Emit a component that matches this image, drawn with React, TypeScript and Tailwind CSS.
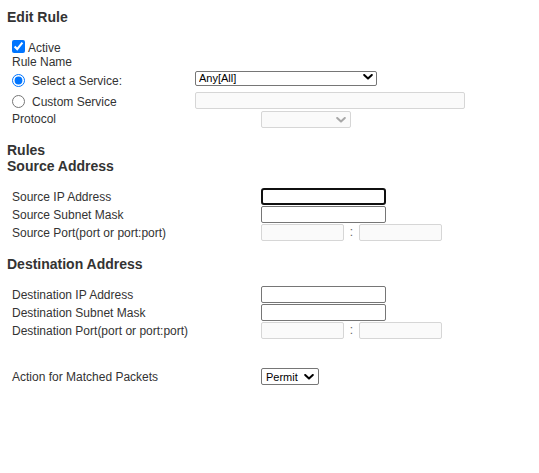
import React from "react";

function Chevron({ color, className }: { color: string; className: string }) {
  return (
    <svg
      width="10"
      height="6"
      viewBox="0 0 10 6"
      className={className}
      aria-hidden="true"
    >
      <path d="M1.2 1 L5 4.6 L8.8 1" fill="none" stroke={color} strokeWidth="2" strokeLinecap="round" strokeLinejoin="round" />
    </svg>
  );
}

function FieldRow({
  label,
  children,
}: {
  label: string;
  children: React.ReactNode;
}) {
  return (
    <div className="flex h-[18px] items-start">
      <div className="mt-[2px] w-[249px] shrink-0 leading-[14px] whitespace-nowrap">{label}</div>
      {children}
    </div>
  );
}

function TextInput({ focused = false }: { focused?: boolean }) {
  return focused ? (
    <input
      type="text"
      className="h-[17px] w-[125px] rounded-[3px] border-2 border-[#101010] bg-white px-[2px] text-[12px] outline-none"
    />
  ) : (
    <input
      type="text"
      className="h-[17px] w-[125px] rounded-[2px] border border-[#767676] bg-white px-[2px] text-[12px] outline-none"
    />
  );
}

function PortInputs() {
  return (
    <div className="flex items-start">
      <input
        type="text"
        disabled
        className="h-[17px] w-[83px] rounded-[2px] border border-[#d6d6d6] bg-[#fafafa] outline-none"
      />
      <span className="w-[15px] text-center leading-[17px] text-[#666]">:</span>
      <input
        type="text"
        disabled
        className="h-[17px] w-[83px] rounded-[2px] border border-[#d6d6d6] bg-[#fafafa] outline-none"
      />
    </div>
  );
}

export default function App() {
  return (
    <div className="min-h-[473px] w-[539px] bg-white px-[7px] font-['Liberation_Sans',Arial,sans-serif] text-[12px] text-[#333]">
      <div className="pt-[9px] text-[14px] font-bold leading-[16px]">Edit Rule</div>

      <div className="pl-[5px]">
        <div className="mt-[15px] flex h-[14px] items-start">
          <input type="checkbox" defaultChecked className="m-0 h-[13px] w-[13px]" />
          <span className="ml-[3px] mt-[1px] leading-[14px]">Active</span>
        </div>
        <div className="h-[14px] pt-[1px] leading-[14px]">Rule Name</div>

        <div className="flex h-[23px] items-start">
          <div className="mt-[5px] flex h-[14px] w-[183px] shrink-0 items-start">
            <input type="radio" name="svc" defaultChecked className="m-0 mt-[0.5px] h-[13px] w-[13px]" />
            <span className="ml-[7px] mt-[1px] leading-[14px]">Select a Service:</span>
          </div>
          <div className="relative mt-[1px] h-[15px] w-[182px]">
            <select
              defaultValue="any"
              className="h-full w-full appearance-none rounded-[2px] border border-[#767676] bg-white pl-[3px] text-[11px] leading-[13px] text-black outline-none"
            >
              <option value="any">Any[All]</option>
            </select>
            <Chevron color="#000" className="pointer-events-none absolute right-[4px] top-[5px]" />
          </div>
        </div>

        <div className="flex h-[19px] items-start">
          <div className="mt-[3px] flex h-[14px] w-[183px] shrink-0 items-start">
            <input type="radio" name="svc" className="m-0 mt-[0.5px] h-[13px] w-[13px]" />
            <span className="ml-[7px] mt-[1px] leading-[14px]">Custom Service</span>
          </div>
          <input
            type="text"
            disabled
            className="mt-[1px] h-[17px] w-[270px] rounded-[2px] border border-[#d6d6d6] bg-[#fafafa] outline-none"
          />
        </div>

        <div className="flex h-[18px] items-start">
          <div className="mt-[2px] w-[249px] shrink-0 leading-[14px]">Protocol</div>
          <div className="relative mt-[1px] h-[17px] w-[90px]">
            <select
              disabled
              className="h-full w-full appearance-none rounded-[2px] border border-[#d6d6d6] bg-[#fafafa] text-[11px] outline-none"
            >
              <option value=""></option>
            </select>
            <Chevron color="#a8a8a8" className="pointer-events-none absolute right-[5px] top-[6px]" />
          </div>
        </div>
      </div>

      <div className="mt-[14px] text-[14px] font-bold leading-[16px]">Rules</div>
      <div className="text-[14px] font-bold leading-[16px]">Source Address</div>

      <div className="mt-[14px] pl-[5px]">
        <FieldRow label="Source IP Address">
          <TextInput focused />
        </FieldRow>
        <FieldRow label="Source Subnet Mask">
          <TextInput />
        </FieldRow>
        <FieldRow label="Source Port(port or port:port)">
          <PortInputs />
        </FieldRow>
      </div>

      <div className="mt-[14px] text-[14px] font-bold leading-[16px]">Destination Address</div>

      <div className="mt-[14px] pl-[5px]">
        <FieldRow label="Destination IP Address">
          <TextInput />
        </FieldRow>
        <FieldRow label="Destination Subnet Mask">
          <TextInput />
        </FieldRow>
        <FieldRow label="Destination Port(port or port:port)">
          <PortInputs />
        </FieldRow>

        <div className="mt-[28px]">
          <FieldRow label="Action for Matched Packets">
            <div className="relative h-[17px] w-[58px]">
              <select
                defaultValue="permit"
                className="h-full w-full appearance-none rounded-[2px] border border-[#767676] bg-white pl-[4px] text-[11px] text-black outline-none"
              >
                <option value="permit">Permit</option>
                <option value="deny">Deny</option>
              </select>
              <Chevron color="#000" className="pointer-events-none absolute right-[5px] top-[6px]" />
            </div>
          </FieldRow>
        </div>
      </div>
    </div>
  );
}
